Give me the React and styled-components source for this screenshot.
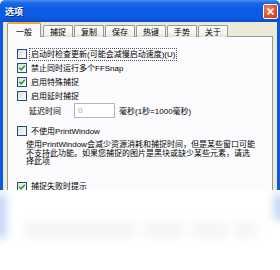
import React from "react";
import styled, { createGlobalStyle } from "styled-components";

const GlobalStyle = createGlobalStyle`
  html, body {
    margin: 0;
    padding: 0;
    background: #ffffff;
  }
  body {
    width: 280px;
    height: 270px;
    overflow: hidden;
    font-family: "Liberation Sans", "Noto Sans CJK SC", sans-serif;
  }
`;

const tabs = ["一般", "捕捉", "复制", "保存", "热键", "手势", "关于"];

const Check = ({ checked }) => (
  <Box>
    {checked && (
      <svg width="8" height="8" viewBox="0 0 8 8">
        <path d="M1.2 3.8 L3.2 5.8 L6.8 1.8" fill="none" stroke="#21a121" strokeWidth="1.6" />
      </svg>
    )}
  </Box>
);

const App = () => {
  return (
    <Page>
      <GlobalStyle />
      <Window>
        <TitleBar>
          <Title>选项</Title>
          <CloseButton>
            <svg width="9" height="9" viewBox="0 0 9 9">
              <path d="M1.5 1.5 L7.5 7.5 M7.5 1.5 L1.5 7.5" stroke="#fff" strokeWidth="1.6" />
            </svg>
          </CloseButton>
        </TitleBar>
        <Frame>
          <TabStrip>
            {tabs.map((t, i) => (
              <Tab key={t} $active={i === 0}>
                {t}
              </Tab>
            ))}
          </TabStrip>
          <Panel>
            <Row $top={10}>
              <Check />
              <Label $focus>启动时检查更新(可能会减慢启动速度)(U)</Label>
            </Row>
            <Row>
              <Check checked />
              <Label>禁止同时运行多个FFSnap</Label>
            </Row>
            <Row>
              <Check checked />
              <Label>启用特殊捕捉</Label>
            </Row>
            <Row>
              <Check />
              <Label>启用延时捕捉</Label>
            </Row>
            <DelayRow>
              <DelayLabel>延迟时间</DelayLabel>
              <Input>0</Input>
              <Unit>毫秒(1秒=1000毫秒)</Unit>
            </DelayRow>
            <Row $top={6}>
              <Check />
              <Label>不使用PrintWindow</Label>
            </Row>
            <Description>
              <Line>使用PrintWindow会减少资源消耗和捕捉时间，但是某些窗口可能</Line>
              <Line>不支持此功能。如果您捕捉的图片是黑块或缺少某些元素，请选</Line>
              <Line>择此项</Line>
            </Description>
            <Row $top={13}>
              <Check checked />
              <Label>捕捉失败时提示</Label>
            </Row>
          </Panel>
        </Frame>
      </Window>
      <Fade>
        <EdgeGlow $side="left" />
        <EdgeGlow $side="right" />
        <GhostButtons>
          <Ghost $w={110} />
          <Ghost $w={40} />
          <Ghost $w={36} />
          <Ghost $w={22} />
        </GhostButtons>
      </Fade>
    </Page>
  );
};

const Page = styled.div`
  width: 280px;
  height: 270px;
  display: flex;
  flex-direction: column;
  background: #ffffff;
`;

const Window = styled.div`
  height: 190px;
  display: flex;
  flex-direction: column;
  overflow: hidden;
`;

const TitleBar = styled.div`
  height: 22px;
  flex-shrink: 0;
  display: flex;
  align-items: center;
  justify-content: space-between;
  padding: 0 2px 0 5px;
  border-radius: 5px 5px 0 0;
  background: linear-gradient(
    #4a92f2 0%,
    #1c66e0 14%,
    #0b5ce8 40%,
    #0a5ae2 80%,
    #0a4cd0 100%
  );
`;

const Title = styled.span`
  color: #ffffff;
  font-size: 9px;
  font-weight: bold;
  text-shadow: 1px 1px 0 #0a2a8a;
`;

const CloseButton = styled.div`
  width: 15px;
  height: 15px;
  box-sizing: border-box;
  border: 1px solid #ffffff;
  border-radius: 2px;
  display: flex;
  align-items: center;
  justify-content: center;
  background: radial-gradient(circle at 35% 30%, #f08a6a 0%, #e0532e 55%, #c53a18 100%);
`;

const Frame = styled.div`
  flex: 1;
  display: flex;
  flex-direction: column;
  background: #ece9d8;
  border-left: 3px solid #0a58e0;
  border-right: 3px solid #0a58e0;
  padding: 1px 4px 0 4px;
`;

const TabStrip = styled.div`
  height: 14px;
  display: flex;
  align-items: flex-end;
  gap: 1px;
  position: relative;
  z-index: 1;
  margin-bottom: -1px;
`;

const Tab = styled.div`
  box-sizing: border-box;
  display: flex;
  align-items: center;
  justify-content: center;
  font-size: 8px;
  color: #000;
  border: 1px solid #919b9c;
  border-bottom: none;
  border-radius: 2px 2px 0 0;
  height: ${(p) => (p.$active ? "15px" : "12px")};
  padding: ${(p) => (p.$active ? "0 8px" : "0 6px")};
  margin-right: ${(p) => (p.$active ? "1px" : "0")};
  background: ${(p) =>
    p.$active ? "#fcfcfe" : "linear-gradient(#ffffff, #f3f2ed 70%, #e2ded3)"};
  border-top: ${(p) => (p.$active ? "2px solid #f5a530" : "1px solid #919b9c")};
  padding-top: ${(p) => (p.$active ? "1px" : "0")};
`;

const Panel = styled.div`
  flex: 1;
  background: #fcfcfe;
  border: 1px solid #919b9c;
  border-bottom: none;
  padding: 0 0 0 9px;
  display: flex;
  flex-direction: column;
`;

const Row = styled.div`
  height: 14px;
  display: flex;
  align-items: center;
  gap: 2px;
  margin-top: ${(p) => (p.$top ? p.$top : 0)}px;
`;

const Box = styled.div`
  width: 10px;
  height: 10px;
  box-sizing: border-box;
  border: 1px solid #1c5180;
  background: linear-gradient(135deg, #dcdcd7, #ffffff);
  display: flex;
  align-items: center;
  justify-content: center;
  flex-shrink: 0;
`;

const Label = styled.span`
  font-size: 8px;
  color: #000;
  line-height: 11px;
  padding: 0 1px;
  border: 1px dotted ${(p) => (p.$focus ? "#555" : "transparent")};
  white-space: nowrap;
`;

const DelayRow = styled.div`
  height: 15px;
  display: flex;
  align-items: center;
  padding-left: 12px;
`;

const DelayLabel = styled.span`
  font-size: 8px;
  width: 45px;
  color: #000;
`;

const Input = styled.div`
  width: 41px;
  height: 15px;
  box-sizing: border-box;
  border: 1px solid #aeb6c4;
  background: #ffffff;
  color: #aca899;
  font-size: 8px;
  display: flex;
  align-items: center;
  padding-left: 3px;
`;

const Unit = styled.span`
  font-size: 8px;
  color: #000;
  margin-left: 4px;
  white-space: nowrap;
`;

const Description = styled.div`
  margin-top: 3px;
  padding-left: 9px;
  display: flex;
  flex-direction: column;
`;

const Line = styled.span`
  font-size: 8px;
  line-height: 8.5px;
  color: #000;
  white-space: nowrap;
`;

const Fade = styled.div`
  flex: 1;
  position: relative;
  overflow: hidden;
  background: #ffffff;
`;

const EdgeGlow = styled.div`
  position: absolute;
  top: 4px;
  ${(p) => (p.$side === "left" ? "left: -6px;" : "right: -6px;")}
  width: 12px;
  height: ${(p) => (p.$side === "left" ? "44px" : "26px")};
  background: #3a6ee8;
  opacity: 0.3;
  filter: blur(4px);
`;

const GhostButtons = styled.div`
  margin: 32px 0 0 25px;
  display: flex;
  gap: 8px;
`;

const Ghost = styled.div`
  width: ${(p) => p.$w}px;
  height: 16px;
  background: #d8d8d8;
  opacity: 0.25;
  filter: blur(4px);
`;

export default App;
